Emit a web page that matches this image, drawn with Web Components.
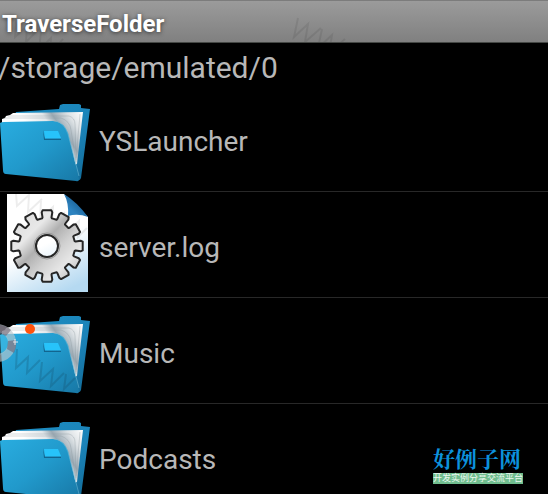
<!DOCTYPE html>
<html lang="en">
<head>
<meta charset="utf-8">
<meta name="viewport" content="width=device-width, initial-scale=1">
<title>TraverseFolder</title>
<style>
    body {
        margin: 0;
        background: #000;
        color: #b8b8b8;
        font-family: Roboto, "Noto Sans CJK SC", sans-serif;
    }
</style>
</head>
<body>
<folder-browser>
    <title-bar slot="title">TraverseFolder</title-bar>
    <current-path slot="path">/storage/emulated/0</current-path>
    <file-row><folder-icon slot="icon"></folder-icon>YSLauncher</file-row>
    <file-row><log-icon slot="icon"></log-icon>server.log</file-row>
    <file-row><folder-icon slot="icon" busy></folder-icon>Music</file-row>
    <file-row><folder-icon slot="icon"></folder-icon>Podcasts</file-row>
    <site-badge slot="badge">
        <span slot="name">好例子网</span>
        <span slot="tagline">开发实例分享交流平台</span>
    </site-badge>
</folder-browser>

<script>
class FolderBrowser extends HTMLElement {
    constructor() {
        super();
        this.attachShadow({ mode: 'open' });
        this.shadowRoot.innerHTML = `
            <style>
                :host {
                    display: flex;
                    flex-direction: column;
                    position: relative;
                    height: 100vh;
                    overflow: hidden;
                }
                main { flex: none; }
            </style>
            <slot name="title"></slot>
            <slot name="path"></slot>
            <main role="list"><slot></slot></main>
            <slot name="badge"></slot>`;
    }
}

class TitleBar extends HTMLElement {
    constructor() {
        super();
        this.attachShadow({ mode: 'open' });
        this.shadowRoot.innerHTML = `
            <style>
                :host {
                    display: flex;
                    flex: none;
                    align-items: center;
                    position: relative;
                    box-sizing: border-box;
                    height: 43px;
                    padding: 4px 2px 0;
                    overflow: hidden;
                    border-top: 1px solid #7c7c7c;
                    border-bottom: 1px solid #454845;
                    background: linear-gradient(#9b9b9b, #808080);
                }
                h1 {
                    position: relative;
                    margin: 0;
                    color: #fff;
                    font-size: 24px;
                    font-weight: 700;
                    line-height: 28px;
                    text-shadow: 0 1px 4px #333;
                }
                svg {
                    position: absolute;
                    left: 0;
                    top: 0;
                }
                path {
                    fill: none;
                    stroke: #000;
                    stroke-width: 2;
                    opacity: .08;
                }
            </style>
            <svg width="360" height="42" aria-hidden="true">
                <path d="M16 17l-1 19 12-11-1 16 13-13M41 31l-2 18 12-12-1 16 13-15M298 17l-4 19 14-13-3 18 16-14M322 28l-4 19 14-13-3 18 16-14"/>
            </svg>
            <h1><slot></slot></h1>`;
    }
}

class CurrentPath extends HTMLElement {
    constructor() {
        super();
        this.attachShadow({ mode: 'open' });
        this.shadowRoot.innerHTML = `
            <style>
                :host {
                    display: block;
                    flex: none;
                    padding: 7px 0 0;
                    font-size: 30px;
                    line-height: 36px;
                    text-indent: -2px;
                    white-space: nowrap;
                }
            </style>
            <slot></slot>`;
    }
}

class FileRow extends HTMLElement {
    constructor() {
        super();
        this.attachShadow({ mode: 'open' });
        this.shadowRoot.innerHTML = `
            <style>
                :host {
                    display: flex;
                    align-items: center;
                    gap: 8px;
                    height: 105px;
                    border-bottom: 1px solid #282828;
                    font-size: 28px;
                    line-height: 36px;
                }
                span { padding-top: 6px; }
            </style>
            <slot name="icon"></slot>
            <span><slot></slot></span>`;
    }

    connectedCallback() {
        this.setAttribute('role', 'listitem');
    }
}

class FolderIcon extends HTMLElement {
    constructor() {
        super();
        this.attachShadow({ mode: 'open' });
        this.shadowRoot.innerHTML = `
            <style>
                :host { display: block; flex: none; }
                svg { display: block; }
                .busy { display: none; }
                :host([busy]) .busy { display: inline; }
            </style>
            <svg width="91" height="105" viewBox="0 0 91 105" aria-hidden="true">
                <defs>
                    <linearGradient id="back" x1="0" y1="0" x2="1" y2="1">
                        <stop offset="0" stop-color="#1d8fc4"/>
                        <stop offset=".6" stop-color="#1b83b8"/>
                        <stop offset="1" stop-color="#126a96"/>
                    </linearGradient>
                    <linearGradient id="front" x1="0" y1="0" x2="1" y2="1">
                        <stop offset="0" stop-color="#29ade0"/>
                        <stop offset=".5" stop-color="#2199cb"/>
                        <stop offset="1" stop-color="#1878a6"/>
                    </linearGradient>
                    <linearGradient id="paper" gradientUnits="userSpaceOnUse" x1="40" y1="58" x2="84" y2="28">
                        <stop offset="0" stop-color="#fff"/>
                        <stop offset=".35" stop-color="#e2e7ea"/>
                        <stop offset=".5" stop-color="#9aa9b3"/>
                        <stop offset=".75" stop-color="#dde2e5"/>
                        <stop offset="1" stop-color="#fff"/>
                    </linearGradient>
                </defs>
                <path d="M15 29l1-3 43-3 1-4 3-1h16l2 1v3l9 1-9 69q-1 3-4 2L15 82z" fill="url(#back)"/>
                <path d="M2 37v-4l3-1 1-2 4-1 3-2 70-1-6 52-4 1L2 60z" fill="url(#paper)"/>
                <path d="M4 32l57 0q9 3 10 12l5 32M8 30h61q6 2 6 8l1 34M80 28l-4 46" fill="none" stroke="#8d999f" stroke-width="1" opacity=".35"/>
                <path d="M0 37q1-1 4-1l49-1q11 1 15 12l11 46q0 3-3 2L6 88q-3 0-3-4z" fill="url(#front)"/>
                <path d="M56 35q8 2 12 13l11 42" fill="none" stroke="#6bbbd9" stroke-width="1" opacity=".6"/>
                <path d="M43 44l2 9h16v1H44z" fill="#12658f"/>
                <path d="M44 45h14l3 7H45z" fill="#27c3fa"/>
                <g class="busy">
                    <path d="M17 51l-1 19 12-11-1 16 13-13M42 64l-2 19 13-12-2 17 13-13M66 76l-2 15 11-11" fill="none" stroke="#123e58" stroke-width="2" opacity=".22"/>
                    <circle cx="-3" cy="45" r="12" fill="#4dc4e6" opacity=".4"/>
                    <circle cx="-3" cy="45" r="15" fill="none" stroke="#b9c6cc" stroke-width="8" opacity=".65"/>
                    <path d="M0 27q7 1 11 5l-5 6-7-3zM8 43l8-1q1 7-2 13l-7-4z" fill="#69596a" opacity=".55"/>
                    <path d="M13 44h5M15 41v6" stroke="#fff" opacity=".8"/>
                    <circle cx="30" cy="31" r="5" fill="#ff520c"/>
                </g>
            </svg>`;
    }
}

class LogIcon extends HTMLElement {
    constructor() {
        super();
        this.attachShadow({ mode: 'open' });
        this.shadowRoot.innerHTML = `
            <style>
                :host { display: block; flex: none; }
                svg { display: block; }
            </style>
            <svg width="91" height="105" viewBox="0 0 91 105" aria-hidden="true">
                <defs>
                    <linearGradient id="page" x1=".3" y1="0" x2=".7" y2="1">
                        <stop offset=".5" stop-color="#fff"/>
                        <stop offset="1" stop-color="#b5d9f1"/>
                    </linearGradient>
                    <linearGradient id="fold" x1="0" y1="1" x2="1" y2="0">
                        <stop offset=".3" stop-color="#2d83c0"/>
                        <stop offset="1" stop-color="#08406f"/>
                    </linearGradient>
                    <linearGradient id="metal" x1="0" y1="0" x2="1" y2="1">
                        <stop offset=".1" stop-color="#dedede"/>
                        <stop offset=".3" stop-color="#e8e8e8"/>
                        <stop offset=".45" stop-color="#b0b0b0"/>
                        <stop offset=".6" stop-color="#d0d0d0"/>
                        <stop offset=".75" stop-color="#e6e6e6"/>
                        <stop offset="1" stop-color="#aaa"/>
                    </linearGradient>
                </defs>
                <path d="M7 2h57l24 23v75H7z" fill="url(#page)"/>
                <path d="M16 2l1 12 12-11-1 17 14-13M41 9l-1 18 13-12-1 18 13-13M67 23l-1 18 13-12-1 16 9-9" fill="none" stroke="#000" stroke-width="2" opacity=".07"/>
                <path d="M64 2q13 8 24 23-10-4-20-1 1-13-4-22z" fill="url(#fold)"/>
                <path id="gear" fill="url(#metal)" stroke="#262626" stroke-width="2" stroke-linejoin="round" fill-rule="evenodd"/>
                <circle cx="47" cy="54" r="13" fill="none" stroke="#999"/>
            </svg>`;

        this.shadowRoot.querySelector('#gear').setAttribute('d', this.gearPath(47, 54, 12));
    }

    gearPath(cx, cy, teeth) {
        // radius and angle (degrees) of the corners of one tooth
        const corners = [[28, -10], [29, -9], [34, -9], [36, -7], [36, 7], [34, 9], [29, 9], [28, 10]];
        const points = [];
        for (let c = 0; c < teeth; c++) {
            for (const [radius, angle] of corners) {
                const a = (c * 360 / teeth + angle) * Math.PI / 180;
                points.push(`${(cx + radius * Math.sin(a)).toFixed(1)} ${(cy - radius * Math.cos(a)).toFixed(1)}`);
            }
        }
        return `M${points.join('L')}ZM${cx - 11} ${cy}a11 11 0 1 0 22 0a11 11 0 1 0 -22 0Z`;
    }
}

class SiteBadge extends HTMLElement {
    constructor() {
        super();
        this.attachShadow({ mode: 'open' });
        this.shadowRoot.innerHTML = `
            <style>
                :host {
                    display: block;
                    position: absolute;
                    right: 25px;
                    bottom: 10px;
                    font-family: "Liberation Serif", "Noto Serif CJK SC", "Noto Sans CJK SC", serif;
                    white-space: nowrap;
                }
                .name {
                    color: #0c91dc;
                    font-size: 22px;
                    font-weight: 700;
                    line-height: 26px;
                }
                .tagline {
                    background: #70bd8e;
                    color: #eaf8ef;
                    font-family: "Liberation Sans", "Noto Sans CJK SC", sans-serif;
                    font-size: 9px;
                    line-height: 11px;
                }
            </style>
            <div class="name"><slot name="name"></slot></div>
            <div class="tagline"><slot name="tagline"></slot></div>`;
    }
}

customElements.define('folder-browser', FolderBrowser);
customElements.define('title-bar', TitleBar);
customElements.define('current-path', CurrentPath);
customElements.define('file-row', FileRow);
customElements.define('folder-icon', FolderIcon);
customElements.define('log-icon', LogIcon);
customElements.define('site-badge', SiteBadge);
</script>
</body>
</html>
